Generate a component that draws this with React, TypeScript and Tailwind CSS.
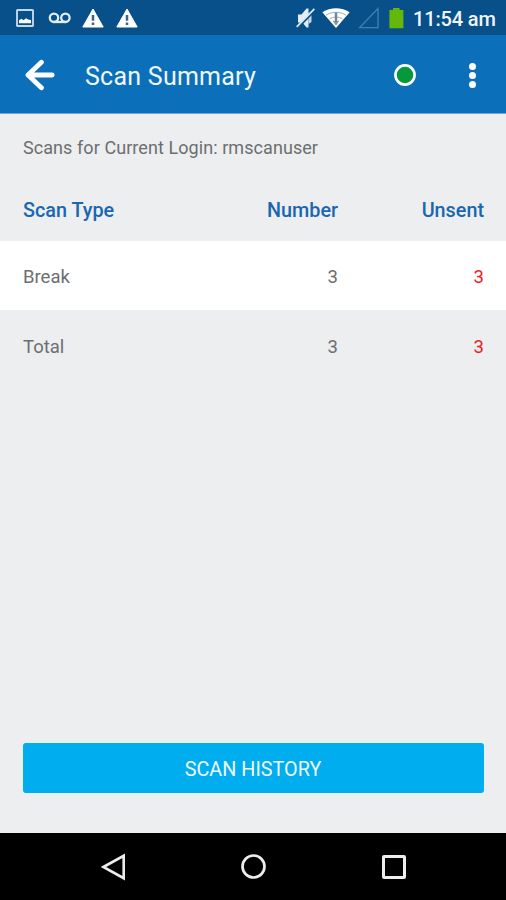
import React from "react";

function PictureIcon() {
  return (
    <svg className="ml-[16px] h-[18px] w-[18px]" viewBox="0 0 18 18" fill="none">
      <rect x="1" y="1" width="16" height="16" rx="0.6" stroke="#c3d8ea" strokeWidth="1.9" />
      <path d="M3 14.2V11.2L5.5 9.8L7.6 11.2L10 9.2L12 10.6L15 11V14.2Z" fill="#fff" />
    </svg>
  );
}

function VoicemailIcon() {
  return (
    <svg className="ml-[14px] h-[12px] w-[24px]" viewBox="0 0 24 12" fill="none" stroke="#e3edf5" strokeWidth="2.3">
      <circle cx="6" cy="5.8" r="4.2" />
      <circle cx="17.4" cy="5.8" r="4.2" />
      <path d="M6 10H17.4" />
    </svg>
  );
}

function WarningIcon() {
  return (
    <svg className="h-[20px] w-[22px]" viewBox="0 0 22 20">
      <path d="M11 1L21.2 19H0.8Z" fill="#fff" stroke="#fff" strokeWidth="1" strokeLinejoin="round" />
      <path d="M11 7V12.7M11 14.4V16.9" stroke="#38658c" strokeWidth="2.5" />
    </svg>
  );
}

function MutedIcon() {
  return (
    <svg className="h-[22px] w-[20px]" viewBox="0 0 20 22">
      <path d="M2 7.5H5.5L10.5 1.5H12.5V20.5H10.5L6.5 15.5H2Z" fill="#e4edf4" />
      <path d="M12.5 5.5L15.5 7V15L12.5 17Z" fill="#c2d5e4" />
      <path d="M1.9 20.7L19.3 3" stroke="#075089" strokeWidth="2.2" />
      <path d="M0.7 19.8L18.4 1.8" stroke="#dce8f1" strokeWidth="1.8" />
    </svg>
  );
}

function WifiIcon() {
  return (
    <svg className="ml-[6px] h-[20px] w-[28px]" viewBox="0 0 28 20">
      <path d="M0.3 4.2C8.3 -1 19.7 -1 27.7 4.2L14 20Z" fill="#fff" />
      <path d="M4 7.2C9.5 3.4 18.5 3.4 24 7.2M7.5 11C11 8.4 17 8.4 20.5 11" fill="none" stroke="#8fb0c9" strokeWidth="1" />
      <path d="M14 4.5V16.5" stroke="#75858f" strokeWidth="2.4" />
      <path d="M11.4 12.8L14 16.2L16.6 12.8" fill="none" stroke="#8b9aa5" strokeWidth="1.4" />
    </svg>
  );
}

function SignalIcon() {
  return (
    <svg className="ml-[8px] h-[22px] w-[22px]" viewBox="0 0 22 22" fill="none">
      <path d="M1.5 20.7L20 1.5V20.7Z" stroke="#3f80b3" strokeWidth="1.3" />
    </svg>
  );
}

function BatteryIcon() {
  return (
    <svg className="ml-[9px] h-[21px] w-[15px]" viewBox="0 0 15 21">
      <path d="M4 0H10.6V2H14.4V20.2H0.4V2H4Z" fill="#64b70b" />
    </svg>
  );
}

function StatusBar() {
  return (
    <div className="flex h-[35px] items-center justify-between bg-[#075089] pt-px">
      <div className="flex items-center">
        <PictureIcon />
        <VoicemailIcon />
        <div className="ml-[10px] flex gap-[12px] pb-px">
          <WarningIcon />
          <WarningIcon />
        </div>
      </div>
      <div className="flex items-center pr-[11px]">
        <MutedIcon />
        <WifiIcon />
        <SignalIcon />
        <BatteryIcon />
        <span className="ml-[9px] w-[82px] pt-[2px] text-[20px] leading-6 font-medium tracking-[-0.15px] whitespace-nowrap text-[#f0f6fb]">
          11:54 am
        </span>
      </div>
    </div>
  );
}

function AppBar() {
  return (
    <header className="flex h-[79px] items-center border-b border-[#6fa5d0] bg-[#0b6fb9] pt-[2px]">
      <svg className="ml-[24px] h-[32px] w-[31px]" viewBox="0 0 31 32" fill="none" stroke="#fff" strokeWidth="4.8" strokeLinecap="round" strokeLinejoin="round">
        <path d="M17.4 3.2L4 16L17.4 28.8M5 16H28.2" />
      </svg>
      <h1 className="ml-[30px] pt-[3px] text-[25px] leading-8 tracking-[0.25px] text-[#eff7fc]">Scan Summary</h1>
      <svg className="ml-auto h-[22px] w-[22px]" viewBox="0 0 22 22">
        <circle cx="11" cy="11" r="9.6" fill="#07983b" stroke="#fff" strokeWidth="2.6" />
      </svg>
      <div className="mr-[30px] ml-[53px] flex flex-col gap-[2px]">
        <i className="h-[7px] w-[7px] rounded-full bg-white" />
        <i className="h-[7px] w-[7px] rounded-full bg-white" />
        <i className="h-[7px] w-[7px] rounded-full bg-white" />
      </div>
    </header>
  );
}

function SummaryRow({ label, count, unsent }: { label: string; count: number; unsent: number }) {
  return (
    <div className="grid h-full grid-cols-[1fr_120px_146px] items-center pr-[22px] pl-[23px] text-[18.5px] text-[#6c6e70]">
      <span>{label}</span>
      <span className="text-right">{count}</span>
      <span className="text-right text-[#ed1c24]">{unsent}</span>
    </div>
  );
}

function NavigationBar() {
  return (
    <nav className="flex h-[67px] items-center bg-black">
      <svg className="ml-[100px] h-[28px] w-[27px]" viewBox="0 0 27 28" fill="none" stroke="#ededed" strokeWidth="2.6">
        <path d="M3.4 14L23.7 2.8V25.2Z" />
      </svg>
      <svg className="ml-[114px] h-[25px] w-[25px]" viewBox="0 0 25 25" fill="none" stroke="#ededed" strokeWidth="2.7">
        <circle cx="12.5" cy="12.5" r="11" />
      </svg>
      <div className="ml-[116px] h-[24px] w-[24px] rounded-[2px] border-[3px] border-[#ededed]" />
    </nav>
  );
}

export default function App() {
  return (
    <div className="flex h-[900px] w-[506px] flex-col overflow-hidden bg-[#edeef0] font-['Roboto',sans-serif]">
      <StatusBar />
      <AppBar />
      <main className="flex flex-1 flex-col">
        <p className="h-[64px] pt-[22px] pl-[23px] text-[18px] leading-6 tracking-[0.07px] text-[#6c6e70]">
          Scans for Current Login: rmscanuser
        </p>
        <div className="grid h-[63px] grid-cols-[1fr_120px_146px] items-center pt-[2px] pr-[22px] pl-[23px] text-[19.8px] font-medium text-[#1a67b1]">
          <span>Scan Type</span>
          <span className="text-right">Number</span>
          <span className="text-right">Unsent</span>
        </div>
        <div className="h-[69px] bg-white pt-[4px]">
          <SummaryRow label="Break" count={3} unsent={3} />
        </div>
        <div className="h-[74px] pt-[2px]">
          <SummaryRow label="Total" count={3} unsent={3} />
        </div>
        <button className="mx-auto mt-auto mb-[40px] h-[50px] w-[461px] rounded-[3px] bg-[#00adef] pt-[3px] text-[19.8px] text-[#effaff]">
          SCAN HISTORY
        </button>
      </main>
      <NavigationBar />
    </div>
  );
}
